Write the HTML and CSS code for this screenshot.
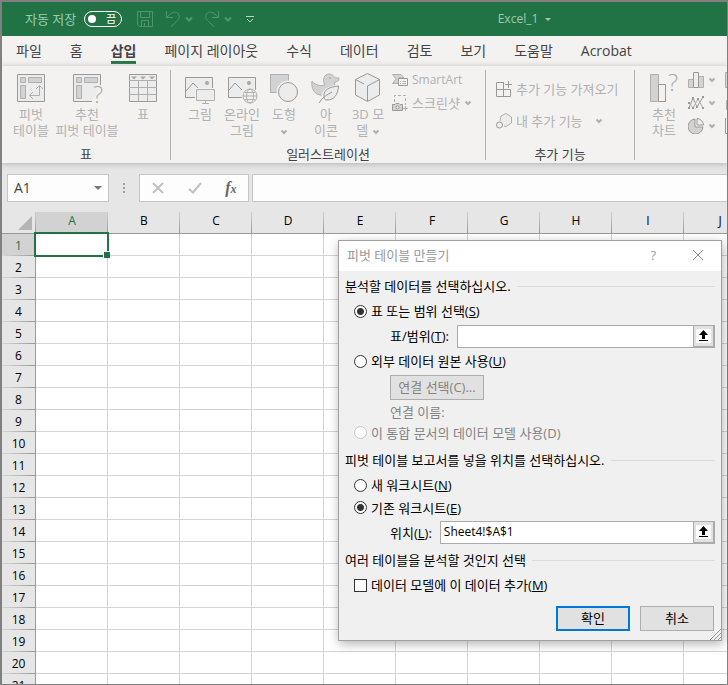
FILE: index.html
```html
<!DOCTYPE html>
<html lang="ko">
<head>
    <meta charset="UTF-8">
    <meta name="viewport" content="width=device-width, initial-scale=1.0">
    <title>Excel_1</title>
    <link rel="stylesheet" href="styles.css">
</head>
<body>
    <div class="app">
        <header class="titlebar">
            <label class="autosave" for="autosave">자동 저장</label>
            <button class="toggle" id="autosave" type="button"><span class="knob"></span>끔</button>
            <div class="quick-access">
                <button type="button" class="qa-btn qa-save" aria-label="저장">
                    <svg width="18" height="18" viewBox="0 0 18 18"><path d="M1.500 1.500H16.500V16.500H3.500L1.500 14.500Z M4.500 1.500V7.500H13.500V1.500 M5.500 16.500V10.500H12.500V16.500 M8.500 13V16"/></svg>
                </button>
                <button type="button" class="qa-btn" aria-label="실행 취소">
                    <svg width="16" height="18" viewBox="0 0 16 18"><path d="M1.500 1V7.500H8 M1.500 7.500L6 3.500C9 1 13 2 14 5C15 8 13 10 11 12L6 16.500"/></svg>
                    <svg width="8" height="6" viewBox="0 0 8 6"><path class="thick" d="M1 1.500L4 4.500L7 1.500"/></svg>
                </button>
                <button type="button" class="qa-btn" aria-label="다시 실행">
                    <svg width="16" height="18" viewBox="0 0 16 18"><path d="M14.500 1V7.500H8 M14.500 7.500L10 3.500C7 1 3 2 2 5C1 8 3 10 5 12L10 16.500"/></svg>
                    <svg width="8" height="6" viewBox="0 0 8 6"><path class="thick" d="M1 1.500L4 4.500L7 1.500"/></svg>
                </button>
                <button type="button" class="qa-btn qa-more" aria-label="사용자 지정">
                    <svg width="8" height="8" viewBox="0 0 8 8"><path d="M0 1.500H8 M1 4L4 7L7 4"/></svg>
                </button>
            </div>
            <div class="doc-name">Excel_1 <span class="caret"></span></div>
        </header>

        <nav class="tabs">
            <a href="#">파일</a>
            <a href="#">홈</a>
            <a href="#" class="active">삽입</a>
            <a href="#">페이지 레이아웃</a>
            <a href="#">수식</a>
            <a href="#">데이터</a>
            <a href="#">검토</a>
            <a href="#">보기</a>
            <a href="#">도움말</a>
            <a href="#">Acrobat</a>
        </nav>

        <div class="ribbon">
            <section class="group group-table">
                <div class="tools">
                    <button type="button" class="tool" disabled>
                        <svg class="icon" viewBox="0 0 32 32"><path class="fill-light outline" d="M2.500 2.500H29.500V29.500H2.500Z"/><path class="fill-mid" d="M5.500 5.500H10.500V10.500H5.500Z M13.500 5.500H26.500V10.500H13.500Z M5.500 13.500H10.500V26.500H5.500Z"/><path d="M15 23.500H24.500V14 M18 20L14.500 23.500L18 27 M21 17L24.500 13.500L28 17"/></svg>
                        <span>피벗<br>테이블</span>
                    </button>
                    <button type="button" class="tool tool-wide" disabled>
                        <svg class="icon" viewBox="0 0 32 32"><path class="fill-light outline" d="M21 29.500H2.500V2.500H29.500V13"/><path class="fill-mid" d="M5.500 5.500H10.500V10.500H5.500Z M13.500 5.500H26.500V10.500H13.500Z M5.500 13.500H10.500V26.500H5.500Z"/><text class="mark" x="22" y="31">?</text></svg>
                        <span>추천<br>피벗 테이블</span>
                    </button>
                    <button type="button" class="tool" disabled>
                        <svg class="icon" viewBox="0 0 32 32"><path class="fill-light outline" d="M2.500 2.500H29.500V29.500H2.500Z"/><path d="M2 8.500H30 M2 15.500H30 M2 22.500H30 M11.500 9V29 M20.500 9V29"/><path class="solid" d="M4 4.500H10L7 7.500Z M13 4.500H19L16 7.500Z M22 4.500H28L25 7.500Z"/></svg>
                        <span>표</span>
                    </button>
                </div>
                <h2>표</h2>
            </section>

            <section class="group group-art">
                <div class="tools">
                    <button type="button" class="tool" disabled>
                        <svg class="icon" viewBox="0 0 32 32"><path class="fill-light outline" d="M1.500 5.500H28.500V25.500H1.500Z"/><path class="outline" d="M2 19L9 11L16 18"/><circle class="solid" cx="23" cy="11" r="2"/><path class="halo" d="M11.500 16.500H31.500V29.500H11.500Z"/><path class="fill-light" d="M12.500 17.500H30.500V28.500H12.500Z M21.500 28.500V31 M18 31.500H25"/></svg>
                        <span>그림</span>
                    </button>
                    <button type="button" class="tool" disabled>
                        <svg class="icon" viewBox="0 0 32 32"><path class="fill-light outline" d="M2.500 5.500H29.500V25.500H2.500Z"/><path class="outline" d="M3 18L9 11L16 18"/><circle class="solid" cx="23" cy="11" r="2"/><circle class="halo" cx="24" cy="24" r="8"/><circle class="fill-bg" cx="24" cy="24" r="7"/><ellipse cx="24" cy="24" rx="3.500" ry="7"/><path d="M17 24H31 M18.500 20.500H29.500 M18.500 27.500H29.500"/></svg>
                        <span>온라인<br>그림</span>
                    </button>
                    <button type="button" class="tool" disabled>
                        <svg class="icon" viewBox="0 0 32 32"><path class="fill-mid" d="M2.500 2.500H20.500V20.500H2.500Z"/><circle class="halo" cx="20" cy="20" r="11"/><circle class="fill-light outline" cx="20" cy="20" r="9.500"/></svg>
                        <span>도형<br><svg class="chev" viewBox="0 0 8 6"><path d="M1.500 1.500L4 4L6.500 1.500"/></svg></span>
                    </button>
                    <button type="button" class="tool" disabled>
                        <svg class="icon" viewBox="0 0 32 32"><path class="fill-mid" d="M2 9C6 14 11 14 15 13C12 8 14 2 19 2C23 2 24 5 25 6L29 6C29 9 27 10 25 10C24 12 25 12 25 15C24 20 17 24 10 23C4 22 1 16 2 9Z"/><circle class="solid" cx="20" cy="6" r="1"/><path class="halo" d="M30 13C20 14 12 17 12 24L9 31L15 29C24 31 31 25 30 13Z"/><path class="fill-light outline" d="M28.500 14C20 15 13 17 14 25C14 27 15 28 17 28C24 28 28 23 28.500 14Z"/><path class="outline" d="M9 31C12 26 16 23 22 20"/></svg>
                        <span>아<br>이콘</span>
                    </button>
                    <button type="button" class="tool" disabled>
                        <svg class="icon" viewBox="0 0 32 32"><path class="fill-light outline" d="M15.500 1.500L27.500 7.500V23L15.500 29.500L3.500 23V7.500Z"/><path class="outline" d="M3.500 7.500L12 12 M15.500 14V29 M15.500 14L27.500 7.500"/></svg>
                        <span>3D 모<br>델 <svg class="chev" viewBox="0 0 8 6"><path d="M1.500 1.500L4 4L6.500 1.500"/></svg></span>
                    </button>
                    <div class="small-tools">
                        <button type="button" class="small-tool latin" disabled>
                            <svg class="icon-sm" viewBox="0 0 16 16"><path class="fill-mid" d="M0.500 2.500H9L12 6H6.500V11.500H0.500L4 7Z"/><path class="fill-bg outline" d="M6.500 6.500H15.500V13.500H6.500Z"/><path d="M8 9.500H9 M10.500 9.500H14 M8 11.500H9 M10.500 11.500H14"/></svg>
                            SmartArt
                        </button>
                        <button type="button" class="small-tool" disabled>
                            <svg class="icon-sm" viewBox="0 0 16 16"><path class="dashed" d="M2.500 7V0.500H13.500V10"/><path class="fill-mid outline" d="M0.500 9.500H3L4 8.500H7L8 9.500H10.500V15.500H0.500Z"/><circle class="fill-bg outline" cx="5.500" cy="12.500" r="1.500"/><path d="M13.500 11V16 M11 13.500H16"/></svg>
                            스크린샷
                            <svg class="chev" viewBox="0 0 8 6"><path d="M1.500 1.500L4 4L6.500 1.500"/></svg>
                        </button>
                    </div>
                </div>
                <h2>일러스트레이션</h2>
            </section>

            <section class="group group-addin">
                <div class="addin-tools">
                    <button type="button" class="small-tool" disabled>
                        <svg class="icon-sm" viewBox="0 0 16 16"><path class="outline" d="M8 1.500H0.500V15.500H14.500V8.500H0.500 M7.500 1.500V15.500 M12.500 0V7 M9 3.500H16"/></svg>
                        추가 기능 가져오기
                    </button>
                    <button type="button" class="small-tool" disabled>
                        <svg class="icon-sm" viewBox="0 0 16 16"><path class="fill-light" d="M4 8L5 3L10 0.500L15.500 4V10L10 13.500L8 13"/><circle class="fill-bg outline" cx="3.500" cy="12" r="3"/></svg>
                        내 추가 기능
                        <svg class="chev chev-far" viewBox="0 0 8 6"><path d="M1.500 1.500L4 4L6.500 1.500"/></svg>
                    </button>
                </div>
                <h2>추가 기능</h2>
            </section>

            <section class="group group-chart">
                <div class="tools">
                    <button type="button" class="tool" disabled>
                        <svg class="icon" viewBox="0 0 32 32"><path class="fill-mid" d="M2.500 2.500H10.500V29.500H2.500Z"/><path class="fill-bg outline" d="M10.500 12.500H17.500V29.500H10.500Z"/><text class="mark" x="20" y="19">?</text></svg>
                        <span>추천<br>차트</span>
                    </button>
                    <div class="small-tools">
                        <button type="button" class="small-tool" aria-label="세로 막대형 차트" disabled>
                            <svg class="icon-sm" viewBox="0 0 16 16"><path class="fill-mid" d="M0.500 7.500H5.500V15.500H0.500Z M10.500 4.500H15.500V15.500H10.500Z"/><path class="fill-light outline" d="M5.500 0.500H10.500V15.500H5.500Z"/></svg>
                            <svg class="chev" viewBox="0 0 8 6"><path d="M1.500 1.500L4 4L6.500 1.500"/></svg>
                        </button>
                        <button type="button" class="small-tool" aria-label="꺾은선형 차트" disabled>
                            <svg class="icon-sm" viewBox="0 0 16 16"><path class="outline" d="M1 13L5 3L9 12L15 2"/><path d="M1 8L5 13L10 4L15 13"/><path class="dots" d="M1 13h0 M5 3h0 M9 12h0 M15 2h0 M1 8h0 M5 13h0 M10 4h0 M15 13h0"/></svg>
                            <svg class="chev" viewBox="0 0 8 6"><path d="M1.500 1.500L4 4L6.500 1.500"/></svg>
                        </button>
                        <button type="button" class="small-tool" aria-label="원형 차트" disabled>
                            <svg class="icon-sm" viewBox="0 0 16 16"><path class="fill-mid outline" d="M7 1A7.500 7.500 0 1 0 15 9H7Z"/><path class="fill-light outline" d="M9 0.500A7 7 0 0 1 15.500 7H9Z"/></svg>
                            <svg class="chev" viewBox="0 0 8 6"><path d="M1.500 1.500L4 4L6.500 1.500"/></svg>
                        </button>
                    </div>
                    <div class="small-tools more-charts">
                        <button type="button" class="small-tool" aria-label="계층 구조 차트" disabled>
                            <svg class="icon-sm" viewBox="0 0 16 16"><path class="fill-mid" d="M0.500 0.500H15.500V15.500H0.500Z"/></svg>
                        </button>
                        <button type="button" class="small-tool" aria-label="통계 차트" disabled>
                            <svg class="icon-sm" viewBox="0 0 16 16"><path class="fill-mid" d="M1.500 5.500H15.500V14.500H1.500Z"/></svg>
                        </button>
                        <button type="button" class="small-tool" aria-label="분산형 차트" disabled>
                            <svg class="icon-sm" viewBox="0 0 16 16"><path class="outline" d="M0.500 0V15.500H16"/></svg>
                        </button>
                    </div>
                </div>
            </section>
        </div>

        <div class="formula-bar">
            <div class="name-box">
                <input type="text" value="A1" aria-label="이름 상자">
                <span class="caret"></span>
            </div>
            <span class="grip"></span>
            <div class="formula-actions">
                <button type="button" aria-label="취소"><svg width="14" height="14" viewBox="0 0 14 14"><path d="M2 2L12 12M12 2L2 12"/></svg></button>
                <button type="button" aria-label="입력"><svg class="check" width="14" height="14" viewBox="0 0 14 14"><path d="M1 8L5 11.500L13 2"/></svg></button>
                <button type="button" class="fx" aria-label="함수 삽입">f<sub>x</sub></button>
            </div>
            <input class="formula-input" type="text" aria-label="수식 입력줄">
        </div>

        <div class="sheet">
            <table>
                <thead>
                    <tr><th class="corner"></th><th class="selected">A</th><th>B</th><th>C</th><th>D</th><th>E</th><th>F</th><th>G</th><th>H</th><th>I</th><th>J</th></tr>
                </thead>
                <tbody>
                    <tr><th class="selected">1</th><td class="current"><span class="cell-cursor"></span></td><td></td><td></td><td></td><td></td><td></td><td></td><td></td><td></td><td></td></tr>
                    <tr><th>2</th><td></td><td></td><td></td><td></td><td></td><td></td><td></td><td></td><td></td><td></td></tr>
                    <tr><th>3</th><td></td><td></td><td></td><td></td><td></td><td></td><td></td><td></td><td></td><td></td></tr>
                    <tr><th>4</th><td></td><td></td><td></td><td></td><td></td><td></td><td></td><td></td><td></td><td></td></tr>
                    <tr><th>5</th><td></td><td></td><td></td><td></td><td></td><td></td><td></td><td></td><td></td><td></td></tr>
                    <tr><th>6</th><td></td><td></td><td></td><td></td><td></td><td></td><td></td><td></td><td></td><td></td></tr>
                    <tr><th>7</th><td></td><td></td><td></td><td></td><td></td><td></td><td></td><td></td><td></td><td></td></tr>
                    <tr><th>8</th><td></td><td></td><td></td><td></td><td></td><td></td><td></td><td></td><td></td><td></td></tr>
                    <tr><th>9</th><td></td><td></td><td></td><td></td><td></td><td></td><td></td><td></td><td></td><td></td></tr>
                    <tr><th>10</th><td></td><td></td><td></td><td></td><td></td><td></td><td></td><td></td><td></td><td></td></tr>
                    <tr><th>11</th><td></td><td></td><td></td><td></td><td></td><td></td><td></td><td></td><td></td><td></td></tr>
                    <tr><th>12</th><td></td><td></td><td></td><td></td><td></td><td></td><td></td><td></td><td></td><td></td></tr>
                    <tr><th>13</th><td></td><td></td><td></td><td></td><td></td><td></td><td></td><td></td><td></td><td></td></tr>
                    <tr><th>14</th><td></td><td></td><td></td><td></td><td></td><td></td><td></td><td></td><td></td><td></td></tr>
                    <tr><th>15</th><td></td><td></td><td></td><td></td><td></td><td></td><td></td><td></td><td></td><td></td></tr>
                    <tr><th>16</th><td></td><td></td><td></td><td></td><td></td><td></td><td></td><td></td><td></td><td></td></tr>
                    <tr><th>17</th><td></td><td></td><td></td><td></td><td></td><td></td><td></td><td></td><td></td><td></td></tr>
                    <tr><th>18</th><td></td><td></td><td></td><td></td><td></td><td></td><td></td><td></td><td></td><td></td></tr>
                    <tr><th>19</th><td></td><td></td><td></td><td></td><td></td><td></td><td></td><td></td><td></td><td></td></tr>
                    <tr><th>20</th><td></td><td></td><td></td><td></td><td></td><td></td><td></td><td></td><td></td><td></td></tr>
                    <tr><th>21</th><td></td><td></td><td></td><td></td><td></td><td></td><td></td><td></td><td></td><td></td></tr>
                </tbody>
            </table>
        </div>
    </div>

    <form class="dialog" role="dialog" aria-labelledby="dialog-title">
        <div class="dialog-title">
            <span id="dialog-title">피벗 테이블 만들기</span>
            <button type="button" aria-label="도움말">?</button>
            <button type="button" aria-label="닫기"><svg width="12" height="12" viewBox="0 0 12 12"><path d="M1 1L11 11M11 1L1 11"/></svg></button>
        </div>
        <div class="dialog-body">
            <h3>분석할 데이터를 선택하십시오.</h3>
            <div class="row">
                <input type="radio" name="source" id="src-range" checked>
                <label for="src-range">표 또는 범위 선택(<u>S</u>)</label>
            </div>
            <div class="row row-field indent">
                <label for="range">표/범위(<u>T</u>):</label>
                <div class="ref-box">
                    <input type="text" id="range">
                    <button type="button" aria-label="범위 선택"><svg width="15" height="14" viewBox="0 0 15 14"><path d="M7.500 1L12 6H9V10H6V6H3Z M3 11H12V12H3Z"/></svg></button>
                </div>
            </div>
            <div class="row">
                <input type="radio" name="source" id="src-external">
                <label for="src-external">외부 데이터 원본 사용(<u>U</u>)</label>
            </div>
            <div class="row row-button indent">
                <button type="button" class="btn btn-connect" disabled>연결 선택(C)...</button>
            </div>
            <div class="row row-name indent disabled">연결 이름:</div>
            <div class="row row-tall disabled">
                <input type="radio" name="source" id="src-model" disabled>
                <label for="src-model">이 통합 문서의 데이터 모델 사용(D)</label>
            </div>

            <h3>피벗 테이블 보고서를 넣을 위치를 선택하십시오.</h3>
            <div class="row">
                <input type="radio" name="target" id="dst-new">
                <label for="dst-new">새 워크시트(<u>N</u>)</label>
            </div>
            <div class="row row-tall">
                <input type="radio" name="target" id="dst-existing" checked>
                <label for="dst-existing">기존 워크시트(<u>E</u>)</label>
            </div>
            <div class="row row-tall indent">
                <label for="location">위치(<u>L</u>):</label>
                <div class="ref-box">
                    <input type="text" id="location" value="Sheet4!$A$1">
                    <button type="button" aria-label="위치 선택"><svg width="15" height="14" viewBox="0 0 15 14"><path d="M7.500 1L12 6H9V10H6V6H3Z M3 11H12V12H3Z"/></svg></button>
                </div>
            </div>

            <h3>여러 테이블을 분석할 것인지 선택</h3>
            <div class="row">
                <input type="checkbox" id="add-model">
                <label for="add-model">데이터 모델에 이 데이터 추가(<u>M</u>)</label>
            </div>
            <div class="dialog-buttons">
                <button type="submit" class="btn btn-primary">확인</button>
                <button type="button" class="btn">취소</button>
            </div>
        </div>
        <svg class="resize" width="12" height="12" viewBox="0 0 12 12"><path d="M1 12L12 1M5 12L12 5M9 12L12 9"/></svg>
    </form>
</body>
</html>
```

FILE: styles.css
```css
* {
    box-sizing: border-box;
}
body {
    margin: 0;
    font-family: "Open Sans", "Noto Sans CJK KR", sans-serif;
    font-size: 13px;
    line-height: 16px;
    color: #000;
}
button,
input {
    font: inherit;
    color: inherit;
    margin: 0;
    padding: 0;
    border: 0;
    background: none;
    border-radius: 0;
    outline: 0;
}
svg {
    display: block;
    flex: none;
    fill: none;
    stroke: #afafaf;
}
h2,
h3 {
    margin: 0;
    font-size: 13px;
    font-weight: normal;
}
.app {
    display: flex;
    flex-direction: column;
    height: 100vh;
    overflow: hidden;
    background: #e6e6e6;
    border: 1px solid #808080;
    border-width: 2px 1px 1px 2px;
}
.caret {
    border: 4px solid transparent;
    border-top-color: currentColor;
    border-bottom: 0;
}

/* title bar */
.titlebar {
    position: relative;
    display: flex;
    align-items: center;
    flex: none;
    height: 34px;
    padding-left: 23px;
    background: #217346;
    color: #9ccbae;
}
.toggle {
    display: flex;
    align-items: center;
    justify-content: space-between;
    width: 38px;
    height: 16px;
    margin-left: 8px;
    padding: 0 5px 0 3px;
    border: 1px solid #fff;
    border-radius: 8px;
    color: #fff;
    font-size: 11px;
    line-height: 12px;
}
.knob {
    width: 8px;
    height: 8px;
    border-radius: 50%;
    background: #fff;
}
.quick-access {
    display: flex;
    align-items: center;
    gap: 11px;
    margin-left: 14px;
}
.qa-btn {
    display: flex;
    align-items: center;
    gap: 4px;
}
.qa-btn svg {
    stroke: #4f9570;
}
.qa-btn .thick {
    stroke-width: 2px;
}
.qa-more {
    margin-left: 3px;
}
.qa-more svg {
    stroke: #b5d8c3;
}
.doc-name {
    position: absolute;
    left: 0;
    right: 0;
    display: flex;
    align-items: center;
    justify-content: center;
    gap: 7px;
    padding-left: 320px;
    font-size: 12px;
    pointer-events: none;
}
.doc-name .caret {
    border-width: 3px 3px 0;
}

/* ribbon */
.tabs {
    display: flex;
    flex: none;
    gap: 28px;
    height: 30px;
    padding: 5px 14px 0;
    background: #f3f2f1;
    font-size: 14px;
    line-height: 20px;
}
.tabs a {
    height: 23px;
    color: #444;
    text-decoration: none;
    white-space: nowrap;
}
.tabs .active {
    font-weight: bold;
    border-bottom: 3px solid #217346;
}
.ribbon {
    display: flex;
    flex: none;
    height: 97px;
    padding: 4px 0 3px;
    overflow: hidden;
    background: #f3f2f1;
    color: #b1b1b1;
    box-shadow: 0 1px 6px #b0b0b0;
}
.group {
    display: flex;
    flex-direction: column;
    justify-content: space-between;
    flex: none;
    padding: 2px 0 0 8px;
    border-right: 1px solid #b0b0b0;
}
.group h2 {
    color: #444;
    text-align: center;
    line-height: 12px;
    padding-right: 8px;
}
.group-table {
    width: 169px;
}
.group-art {
    width: 315px;
}
.group-addin {
    width: 149px;
}
.group-chart {
    border: 0;
}
.tools {
    display: flex;
}
.tool {
    display: flex;
    flex-direction: column;
    align-items: center;
    gap: 2px;
    width: 42px;
    height: 66px;
    white-space: nowrap;
}
.tool-wide {
    width: 70px;
}
.icon {
    width: 32px;
    height: 32px;
    overflow: visible;
}
.icon-sm {
    width: 16px;
    height: 16px;
}
.chev {
    display: inline-block;
    width: 8px;
    height: 6px;
    vertical-align: middle;
    stroke-width: 2px;
}
.chev-far {
    margin-left: 8px;
}
.outline {
    stroke: #999;
}
.fill-light {
    fill: #ececec;
}
.fill-mid {
    fill: #d2d2d2;
}
.fill-bg {
    fill: #f3f2f1;
}
.solid {
    fill: #a9a9a9;
    stroke: none;
}
.halo {
    fill: #f3f2f1;
    stroke: #f3f2f1;
}
.dashed {
    stroke-dasharray: 3 2;
}
.dots {
    stroke: #999;
    stroke-width: 2px;
    stroke-linecap: square;
}
.mark {
    fill: #a9a9a9;
    stroke: none;
    font-size: 24px;
    font-weight: 300;
}
.small-tools {
    display: flex;
    flex-direction: column;
    gap: 7px;
    padding-left: 3px;
}
.more-charts {
    padding-left: 9px;
}
.small-tool {
    display: flex;
    align-items: center;
    gap: 4px;
    white-space: nowrap;
}
.latin {
    font-size: 12px;
}
.addin-tools {
    display: flex;
    flex-direction: column;
    gap: 16px;
    padding: 9px 0 0 2px;
}

/* formula bar */
.formula-bar {
    display: flex;
    flex: none;
    padding: 11px 0 10px 5px;
    color: #444;
}
.name-box,
.formula-actions,
.formula-input {
    height: 28px;
    background: #fdfdfd;
    border: 1px solid #c6c6c6;
}
.name-box {
    display: flex;
    align-items: center;
    width: 102px;
    padding: 0 6px;
    font-size: 14px;
}
.name-box input {
    flex: 1;
    min-width: 0;
}
.name-box .caret {
    color: #777;
}
.grip {
    width: 2px;
    height: 10px;
    margin: 9px 14px;
    background: repeating-linear-gradient(#a0a0a0 0 2px, transparent 2px 4px);
}
.formula-actions {
    display: flex;
    align-items: center;
    justify-content: space-around;
    width: 110px;
}
.formula-actions svg {
    stroke: #c0c0c0;
    stroke-width: 2px;
}
.fx {
    font-family: "Liberation Serif", serif;
    font-size: 16px;
    font-style: italic;
    font-weight: bold;
    color: #666;
}
.fx sub {
    font-size: 12px;
    vertical-align: baseline;
}
.formula-input {
    flex: 1;
    min-width: 0;
    margin-left: 3px;
    border-right: 0;
}

/* sheet */
.sheet {
    flex: 1;
    min-height: 0;
    overflow: hidden;
}
.sheet table {
    table-layout: fixed;
    width: 754px;
    border-collapse: separate;
    border-spacing: 0;
    font-size: 12px;
}
.sheet th,
.sheet td {
    height: 22px;
    padding: 0;
    font-weight: normal;
    line-height: 16px;
}
.sheet td {
    background: #fff;
    border-right: 1px solid #d4d4d4;
    border-bottom: 1px solid #d4d4d4;
}
.sheet thead th {
    width: 72px;
    padding-bottom: 3px;
    border-bottom: 1px solid #999;
    background: linear-gradient(#d0d0d0, #999) right / 1px 100% no-repeat #e6e6e6;
}
.sheet tbody th {
    padding-top: 2px;
    border-right: 1px solid #999;
    background: linear-gradient(90deg, #d8d8d8, #999) bottom / 100% 1px no-repeat #e6e6e6;
}
.sheet .selected {
    background-color: #d2d2d2;
    color: #217346;
}
.sheet thead .corner {
    position: relative;
    width: 34px;
}
.corner::after {
    content: "";
    position: absolute;
    right: 4px;
    bottom: 3px;
    border: 7px solid #b4b4b4;
    border-top-color: transparent;
    border-left-color: transparent;
}
.current {
    position: relative;
}
.cell-cursor {
    position: absolute;
    inset: -2px;
    border: 2px solid #217346;
}
.cell-cursor::after {
    content: "";
    position: absolute;
    right: -3px;
    bottom: -3px;
    width: 6px;
    height: 6px;
    background: #217346;
    border: 1px solid #fff;
    border-width: 1px 0 0 1px;
}

/* pivot table dialog, floats over the sheet */
.dialog {
    position: absolute;
    top: 240px;
    right: 6px;
    width: 384px;
    background: #f0f0f0;
    border: 1px solid #a0a0a0;
    box-shadow: 1px 3px 10px rgba(0, 0, 0, 0.3);
}
.dialog-title {
    display: flex;
    align-items: center;
    height: 30px;
    padding: 0 17px 2px 8px;
    background: #fff;
    color: #999;
}
.dialog-title span {
    flex: 1;
}
.dialog-title button {
    margin-left: 36px;
}
.dialog-title svg {
    stroke: #888;
}
.dialog-body {
    padding: 0 6px 9px;
}
.dialog h3 {
    display: flex;
    align-items: center;
    gap: 6px;
    height: 30px;
}
.dialog h3::after {
    content: "";
    flex: 1;
    height: 1px;
    background: #dcdcdc;
}
.row {
    display: flex;
    align-items: center;
    gap: 4px;
    height: 20px;
    padding-left: 9px;
}
.row u {
    text-underline-offset: 1px;
}
.indent {
    gap: 8px;
    padding-left: 45px;
}
.row-field {
    height: 30px;
}
.row-button {
    height: 33px;
}
.row-name {
    height: 16px;
}
.row-tall {
    height: 25px;
}
.disabled {
    color: #838383;
}
.row input[type="radio"],
.row input[type="checkbox"] {
    appearance: none;
    flex: none;
    width: 13px;
    height: 13px;
    background: #fff;
    border: 1px solid #333;
}
.row input[type="radio"] {
    border-radius: 50%;
}
.row input[type="radio"]:checked {
    background: radial-gradient(circle, #333 3px, #fff 4px);
}
.row input[type="radio"]:disabled {
    border-color: #c8c8c8;
}
.ref-box {
    display: flex;
    flex: 1;
    height: 23px;
    background: #fff;
    border: 1px solid #ababab;
}
.ref-box input {
    flex: 1;
    min-width: 0;
    padding: 0 3px 2px;
    font-size: 12px;
}
.ref-box button {
    width: 21px;
    padding: 2px;
    border: 1px solid #ababab;
    border-width: 0 1px 1px;
    background: #e1e1e1;
}
.ref-box svg {
    background: #fff;
    fill: #000;
    stroke: none;
}
.btn {
    width: 74px;
    height: 25px;
    padding-bottom: 2px;
    background: #e1e1e1;
    border: 1px solid #adadad;
}
.btn-connect {
    width: 94px;
    color: #838383;
}
.btn-primary {
    border: 2px solid #0078d7;
}
.dialog-buttons {
    display: flex;
    justify-content: flex-end;
    gap: 10px;
    padding: 11px 1px 0 0;
}
.resize {
    position: absolute;
    right: 0;
    bottom: 0;
    stroke: #999;
}
```
